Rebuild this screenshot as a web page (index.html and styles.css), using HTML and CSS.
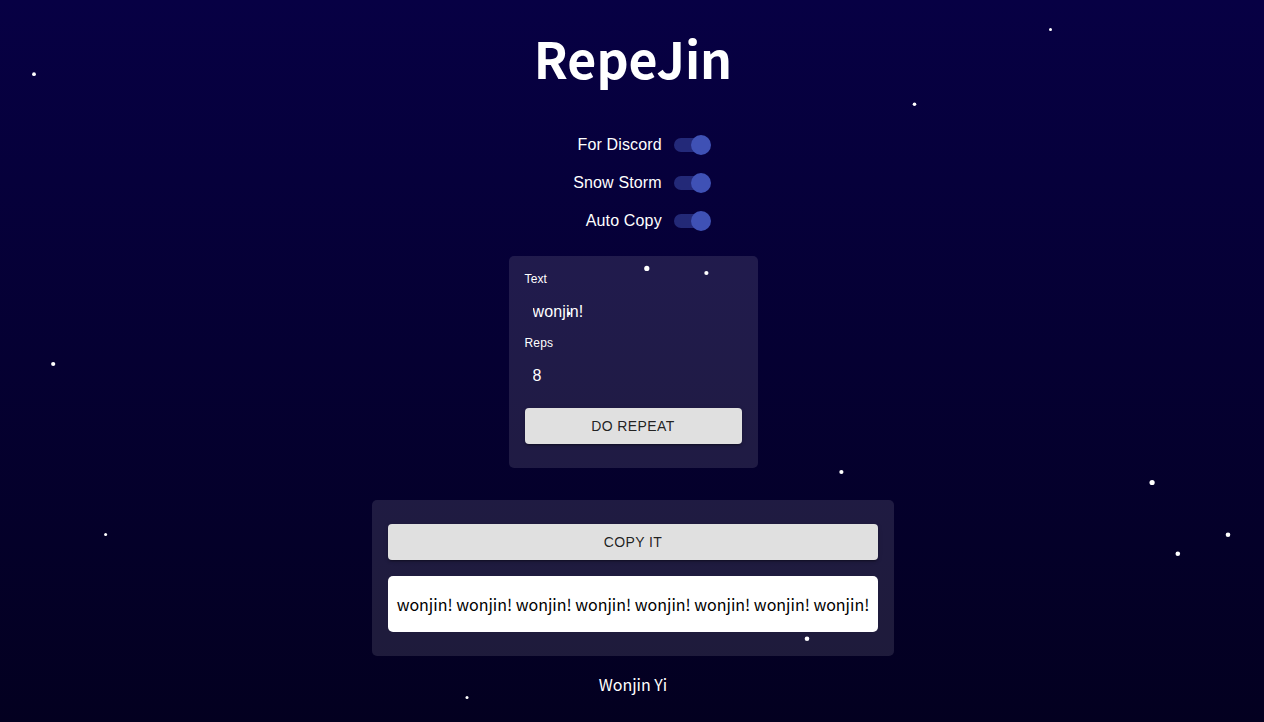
FILE: index.html
```html
<!DOCTYPE html>
<html lang="en">
<head>
<meta charset="utf-8">
<meta name="viewport" content="width=device-width, initial-scale=1">
<title>RepeJin</title>
<link rel="stylesheet" href="styles.css">
</head>
<body>
<svg class="snow" viewBox="0 0 1264 722" preserveAspectRatio="xMidYMid slice" aria-hidden="true">
  <circle cx="34" cy="74.2" r="1.9"/>
  <circle cx="1050.5" cy="29.5" r="1.5"/>
  <circle cx="914.5" cy="104.2" r="1.8"/>
  <circle cx="646.8" cy="268.4" r="2.6"/>
  <circle cx="706.4" cy="273" r="2.1"/>
  <circle cx="568.9" cy="313.5" r="1.7"/>
  <circle cx="53.2" cy="364" r="2.1"/>
  <circle cx="841.4" cy="472" r="2.1"/>
  <circle cx="1152.1" cy="482.5" r="2.6"/>
  <circle cx="1228" cy="534.7" r="2.3"/>
  <circle cx="1177.8" cy="553.7" r="2.3"/>
  <circle cx="105.6" cy="534.4" r="1.5"/>
  <circle cx="807" cy="638.8" r="2.3"/>
  <circle cx="467" cy="697.5" r="1.5"/>
</svg>
<main class="page">
  <h1 class="title">RepeJin</h1>
  <div class="options">
    <label class="option">For Discord <input class="switch" type="checkbox" role="switch" checked></label>
    <label class="option">Snow Storm <input class="switch" type="checkbox" role="switch" checked></label>
    <label class="option">Auto Copy <input class="switch" type="checkbox" role="switch" checked></label>
  </div>
  <form class="card form">
    <div class="field">
      <label class="field-label" for="text">Text</label>
      <input class="field-input" id="text" type="text" value="wonjin!">
    </div>
    <div class="field">
      <label class="field-label" for="reps">Reps</label>
      <input class="field-input" id="reps" type="text" inputmode="numeric" value="8">
    </div>
    <button class="button" type="button">DO REPEAT</button>
  </form>
  <section class="card result">
    <button class="button" type="button">COPY IT</button>
    <p class="output">wonjin! wonjin! wonjin! wonjin! wonjin! wonjin! wonjin! wonjin!</p>
  </section>
  <footer class="footer">Wonjin Yi</footer>
</main>
</body>
</html>
```
FILE: styles.css
```css
* {
  box-sizing: border-box;
}

html {
  min-height: 100%;
  background: linear-gradient(#070044, #030020);
}

body {
  margin: 0;
  color: #fff;
  font-family: "Noto Sans CJK KR", sans-serif;
  font-size: 16px;
  line-height: 24px;
}

.snow {
  position: fixed;
  inset: 0;
  z-index: 1;
  width: 100%;
  height: 100%;
  fill: #fff;
  pointer-events: none;
}

.page {
  display: flex;
  flex-direction: column;
  align-items: center;
  min-height: 100vh;
  padding: 16px 0 24px 2px;
}

.title {
  margin: 0;
  font-size: 50px;
  font-weight: 700;
  line-height: 82px;
}

.options {
  display: flex;
  flex-direction: column;
  align-items: flex-end;
  margin-top: 28px;
  padding-left: 18px;
  font-family: "Liberation Sans", Arial, sans-serif;
}

.option {
  display: flex;
  align-items: center;
  gap: 12px;
  height: 38px;
  letter-spacing: 0.15px;
  cursor: pointer;
}

.switch {
  appearance: none;
  position: relative;
  display: flex;
  align-items: center;
  width: 37px;
  height: 20px;
  margin: 0;
  cursor: pointer;
}

.switch::before {
  content: "";
  width: 34px;
  height: 14px;
  border-radius: 7px;
  background: #3f51b5;
  opacity: 0.5;
}

.switch::after {
  content: "";
  position: absolute;
  top: 0;
  left: 0;
  width: 20px;
  height: 20px;
  border-radius: 50%;
  background: #3f51b5;
}

.switch:checked::after {
  left: auto;
  right: 0;
}

.card {
  display: flex;
  flex-direction: column;
  padding: 16px 16px 24px;
  border-radius: 5px;
  background: rgba(255, 250, 255, 0.11);
}

.form {
  margin-top: 16px;
}

.field {
  display: flex;
  flex-direction: column;
  height: 64px;
  font-family: "Liberation Sans", Arial, sans-serif;
  letter-spacing: 0.15px;
}

.field-label {
  font-size: 12px;
  line-height: 14px;
}

.field-input {
  width: 217px;
  height: 35px;
  margin-top: 8px;
  padding: 8px;
  border: 0;
  background: transparent;
  color: #fff;
  font: inherit;
  letter-spacing: inherit;
  line-height: 19px;
  outline: 0;
}

.button {
  height: 36px;
  margin-top: 8px;
  padding: 0 16px;
  border: 0;
  border-radius: 4px;
  background: #e0e0e0;
  box-shadow: 0 3px 1px -2px rgba(0, 0, 0, 0.2), 0 2px 2px rgba(0, 0, 0, 0.14), 0 1px 5px rgba(0, 0, 0, 0.12);
  color: rgba(0, 0, 0, 0.87);
  font-family: "Liberation Sans", Arial, sans-serif;
  font-size: 14px;
  letter-spacing: 0.4px;
  cursor: pointer;
}

.result {
  max-width: 100%;
  margin-top: 32px;
}

.output {
  margin: 16px 0 0;
  padding: 16px 9px;
  border-radius: 5px;
  background: #fff;
  color: #000;
}

.footer {
  margin-top: 16px;
}
```
